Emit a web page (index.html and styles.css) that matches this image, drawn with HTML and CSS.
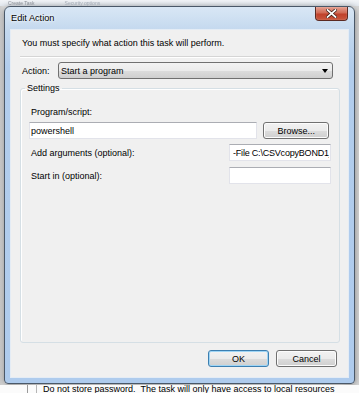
FILE: index.html
```html
<!DOCTYPE html>
<html lang="en">
<head>
  <meta charset="UTF-8">
  <title>Edit Action</title>
  <link rel="stylesheet" href="styles.css">
</head>
<body>
  <div class="screen">
    <div class="backdrop-top">
      <span class="blur-text">Create Task</span>
      <span class="blur-text faint">Security options</span>
    </div>

    <div class="window">
      <div class="titlebar">
        <span class="title">Edit Action</span>
        <button class="close-btn" type="button" aria-label="Close">
          <svg width="11" height="9" viewBox="0 0 11 9">
            <path d="M1.5 1 L9.5 8 M9.5 1 L1.5 8" stroke="#3a1a14" stroke-width="3.2" stroke-linecap="square"/>
            <path d="M1.5 1 L9.5 8 M9.5 1 L1.5 8" stroke="#ffffff" stroke-width="1.7" stroke-linecap="square"/>
          </svg>
        </button>
      </div>

      <div class="client">
        <p class="intro">You must specify what action this task will perform.</p>
        <div class="separator"></div>

        <div class="action-row">
          <span class="label">Action:</span>
          <div class="select">
            <span>Start a program</span>
            <span class="arrow"></span>
          </div>
        </div>

        <fieldset class="group">
          <legend>Settings</legend>

          <span class="label field-label">Program/script:</span>
          <div class="program-row">
            <input class="textbox program-box" type="text" value="powershell" readonly>
            <button class="btn browse-btn" type="button">Browse...</button>
          </div>

          <div class="pair-row first-pair">
            <span class="label">Add arguments (optional):</span>
            <input class="textbox small-box args-box" type="text" value="-File C:\CSVcopyBOND1_Backup.ps1" readonly>
          </div>

          <div class="pair-row">
            <span class="label">Start in (optional):</span>
            <input class="textbox small-box" type="text" value="" readonly>
          </div>
        </fieldset>

        <div class="buttons">
          <button class="btn default-btn" type="button">OK</button>
          <button class="btn" type="button">Cancel</button>
        </div>
      </div>
    </div>

    <div class="under-row">
      <span class="under-lines"></span>
      <span class="under-text">Do not store password.&nbsp; The task will only have access to local resources</span>
    </div>
  </div>
</body>
</html>
```

FILE: styles.css
```css
html, body {
  margin: 0;
  padding: 0;
  overflow: hidden;
  background-color: #f4f4f4;
}

.screen {
  width: 359px;
  height: 393px;
  overflow: hidden;
  background: linear-gradient(to right, #cfcfcf 0, #e4e4e4 4px, #f6f6f6 40px, #f6f6f6 340px, #d6d6d6 359px);
  font-family: 'Liberation Sans', Arial, sans-serif;
  font-size: 9px;
  color: #000000;
  display: flex;
  flex-direction: column;
}

/* blurred window behind the dialog */
.backdrop-top {
  height: 6px;
  display: flex;
  gap: 30px;
  padding-left: 8px;
  overflow: hidden;
  background: linear-gradient(#f2f4f7, #e3e8ee);
}

.blur-text {
  font-size: 5px;
  line-height: 6px;
  color: #8a8f96;
  filter: blur(0.6px);
}

.blur-text.faint {
  color: #a4acb6;
}

/* dialog frame */
.window {
  width: 349px;
  height: 376px;
  margin-left: 4px;
  border: 1px solid #4a5868;
  border-radius: 6px 6px 4px 4px;
  background: linear-gradient(#d9e7f5 0, #c3d8ee 24px, #b2cdec 60px, #aecbed 100%);
  box-shadow: 0 1px 6px rgba(0, 0, 0, 0.45);
  display: flex;
  flex-direction: column;
}

.titlebar {
  height: 22px;
  display: flex;
  align-items: flex-start;
  justify-content: space-between;
}

.title {
  margin: 6px 0 0 6px;
  font-size: 9.2px;
  line-height: 11px;
  text-shadow: 0 0 4px #ffffff, 0 0 2px #ffffff;
}

.close-btn {
  width: 33px;
  height: 14px;
  margin: 0 6px 0 0;
  padding: 0;
  border: 1px solid #5b2a22;
  border-top: none;
  border-radius: 0 0 4px 4px;
  background: linear-gradient(#e6a090 0, #d06a55 45%, #c0412b 55%, #c9573e 100%);
  box-shadow: inset 0 0 1px rgba(255, 255, 255, 0.7);
  display: flex;
  align-items: center;
  justify-content: center;
}

.client {
  flex: 1;
  margin: 0 5px 5px 5px;
  padding: 0 8px 0 9px;
  border: 1px solid #e4ecf5;
  background-color: #f0f0f0;
  display: flex;
  flex-direction: column;
}

.intro {
  margin: 6px 0 0 0;
  padding-left: 2px;
  line-height: 14px;
}

.separator {
  margin-top: 6px;
  height: 0;
  border-top: 1px solid #d5d5d5;
  border-bottom: 1px solid #ffffff;
}

.label {
  line-height: 14px;
  white-space: nowrap;
}

.action-row {
  margin-top: 4px;
  display: flex;
  align-items: center;
  padding-left: 2px;
}

.action-row .label {
  width: 36px;
}

.select {
  width: 269px;
  height: 15px;
  padding: 0 2px;
  border: 1px solid #707070;
  border-radius: 3px;
  background: linear-gradient(#f2f2f2 0, #ebebeb 50%, #dddddd 50%, #cfcfcf 100%);
  display: flex;
  align-items: center;
  justify-content: space-between;
  line-height: 14px;
}

.arrow {
  width: 0;
  height: 0;
  margin-right: 2px;
  border-left: 3px solid transparent;
  border-right: 3px solid transparent;
  border-top: 4px solid #000000;
}

/* settings group box */
.group {
  flex: 1;
  margin: 2px 0 0 0;
  padding: 10px 10px 0 8px;
  border: 1px solid #d5dfe5;
  border-radius: 3px;
  box-shadow: inset 1px 1px 0 #ffffff;
  display: flex;
  flex-direction: column;
  min-width: 0;
}

.group legend {
  margin-left: -4px;
  padding: 0 2px;
  line-height: 14px;
}

.field-label {
  padding-left: 2px;
}

.program-row {
  margin-top: 3px;
  display: flex;
  gap: 6px;
}

.textbox {
  box-sizing: border-box;
  height: 17px;
  margin: 0;
  padding: 0 1px;
  border: 1px solid #e2e3ea;
  border-top-color: #abadb3;
  background-color: #ffffff;
  font-family: 'Liberation Sans', Arial, sans-serif;
  font-size: 9px;
  color: #000000;
  outline: none;
}

.program-box {
  width: 230px;
}

.small-box {
  width: 102px;
  margin-right: -2px;
  padding-left: 3px;
}

.args-box {
  letter-spacing: -0.2px;
}

.pair-row {
  margin-top: 6px;
  padding-left: 2px;
  display: flex;
  align-items: center;
  justify-content: space-between;
}

.pair-row.first-pair {
  margin-top: 5px;
}

.btn {
  box-sizing: border-box;
  height: 17px;
  margin: 0;
  padding: 0;
  border: 1px solid #707070;
  border-radius: 3px;
  background: linear-gradient(#f2f2f2 0, #ebebeb 50%, #dddddd 50%, #cfcfcf 100%);
  box-shadow: inset 0 0 0 1px #fcfcfc;
  font-family: 'Liberation Sans', Arial, sans-serif;
  font-size: 9px;
  color: #000000;
}

.browse-btn {
  width: 66px;
}

.buttons {
  margin: 7px 0 10px 0;
  padding-right: 3px;
  display: flex;
  justify-content: flex-end;
  gap: 7px;
}

.buttons .btn {
  width: 61px;
}

.default-btn {
  border-color: #3c7fb1;
  box-shadow: inset 0 0 0 1px #9fd5f5;
}

/* strip of the parent window under the dialog */
.under-row {
  margin-top: 1px;
  display: flex;
  align-items: flex-start;
  height: 8px;
  background-color: #fbfbfb;
}

.under-lines {
  width: 8px;
  height: 8px;
  margin-left: 27px;
  border-left: 1px solid #9a9a9a;
  border-right: 1px solid #b5b5b5;
}

.under-text {
  margin-left: 6px;
  line-height: 8px;
  white-space: nowrap;
}
```
